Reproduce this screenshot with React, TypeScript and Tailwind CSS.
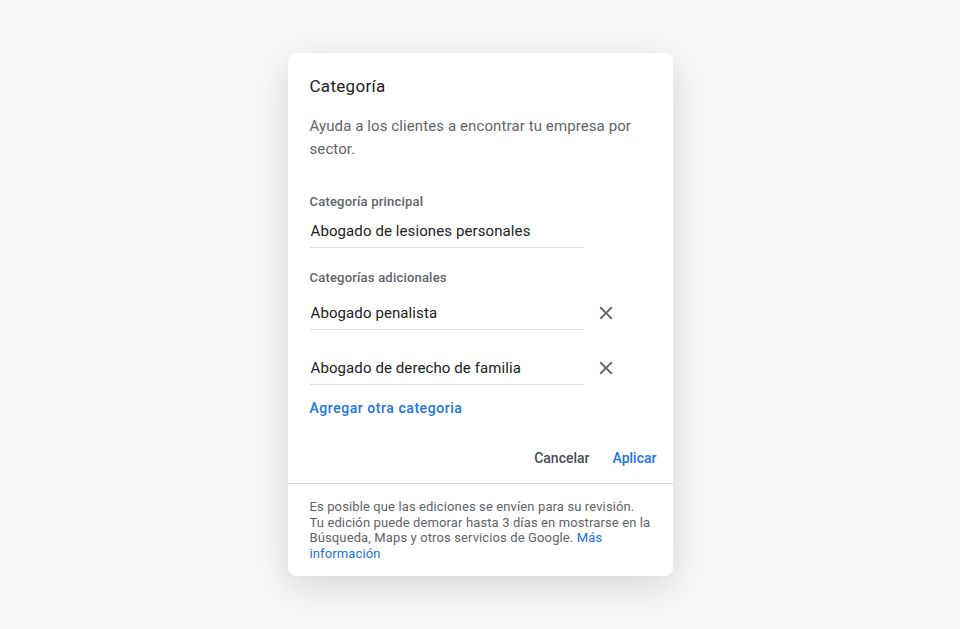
function CloseIcon() {
  return (
    <svg viewBox="0 0 24 24" className="w-[22px] h-[22px] fill-[#5f6368]">
      <path d="M19 6.41L17.59 5 12 10.59 6.41 5 5 6.41 10.59 12 5 17.59 6.41 19 12 13.41 17.59 19 19 17.59 13.41 12z" />
    </svg>
  )
}

function Field({ value, removable }: { value: string; removable?: boolean }) {
  return (
    <div className="flex items-center">
      <div className="w-[274px] border-b border-[#dadce0] pb-[5px] text-[15px] leading-[22px] tracking-[0.1px] text-[#202124] pl-[1px]">
        {value}
      </div>
      {removable && (
        <button className="ml-[11px] flex items-center justify-center w-[22px] h-[22px] -mt-[6px]">
          <CloseIcon />
        </button>
      )}
    </div>
  )
}

export default function App() {
  return (
    <div className="min-h-[629px] bg-[#f7f7f7] flex justify-center pt-[53px] font-['Roboto',sans-serif]">
      <div className="w-[385px] h-[523px] bg-white rounded-[8px] shadow-[0_10px_35px_rgba(0,0,0,0.13)] flex flex-col">
        <div className="px-[22px] pt-[21px]">
          <h1 className="text-[17px] leading-[24px] tracking-[0.3px] text-[#202124]">Categoría</h1>
          <p className="mt-[17px] text-[15px] leading-[23px] tracking-[0.1px] text-[#5f6368]">
            Ayuda a los clientes a encontrar tu empresa por sector.
          </p>

          <div className="mt-[31px] text-[13px] leading-[20px] font-medium tracking-[0.2px] text-[#5f6368]">
            Categoría principal
          </div>
          <div className="mt-[8px]">
            <Field value="Abogado de lesiones personales" />
          </div>

          <div className="mt-[20px] text-[13px] leading-[20px] font-medium tracking-[0.2px] text-[#5f6368]">
            Categorías adicionales
          </div>
          <div className="mt-[14px]">
            <Field value="Abogado penalista" removable />
          </div>
          <div className="mt-[27px]">
            <Field value="Abogado de derecho de familia" removable />
          </div>

          <a className="block mt-[13px] text-[14px] leading-[20px] font-medium text-[#1a73e8] tracking-[0.55px]">
            Agregar otra categoria
          </a>
        </div>

        <div className="flex justify-end gap-[23px] pr-[16px] mt-[30px] text-[14px] leading-[20px] font-medium">
          <button className="text-[#4a4d51]">Cancelar</button>
          <button className="text-[#1a73e8]">Aplicar</button>
        </div>

        <div className="mt-[15px] border-t border-[#dadce0]" />

        <p className="px-[22px] pt-[15px] pr-[20px] text-[13px] leading-[15.5px] tracking-[0.12px] text-[#5f6368]">
          Es posible que las ediciones se envíen para su revisión.
          <br />
          Tu edición puede demorar hasta 3 días en mostrarse en la Búsqueda, Maps y otros servicios de Google.{" "}
          <a className="text-[#1a73e8]">Más información</a>
        </p>
      </div>
    </div>
  )
}
